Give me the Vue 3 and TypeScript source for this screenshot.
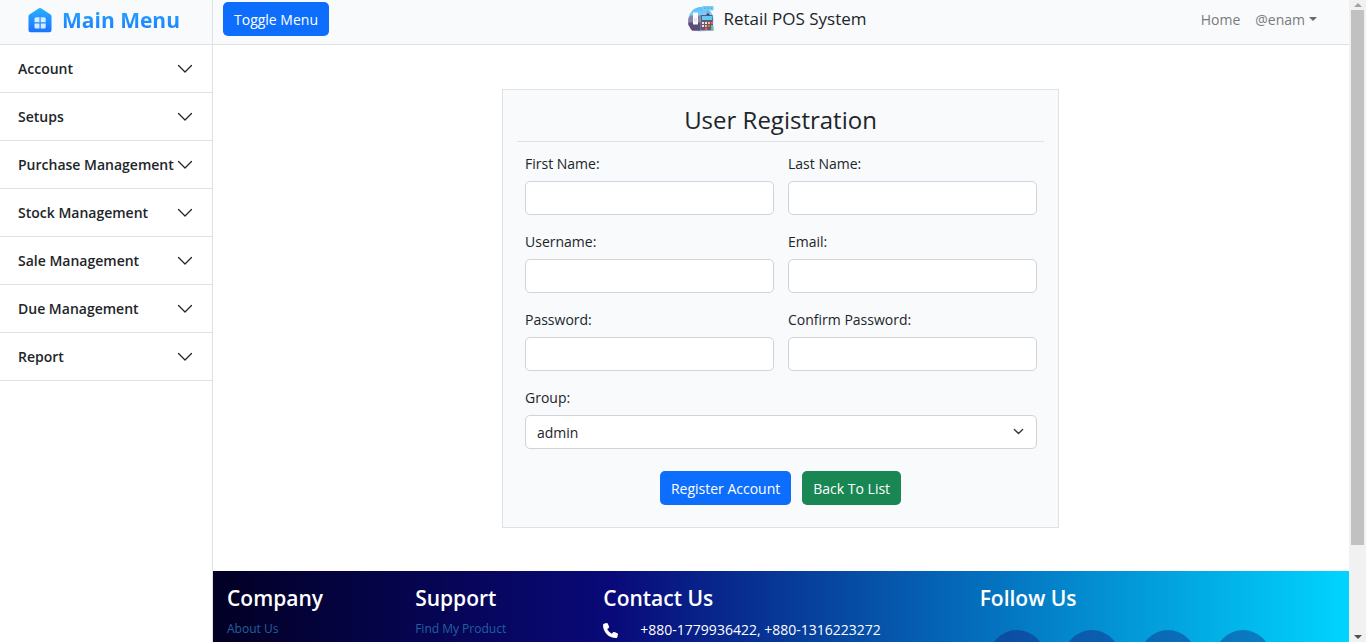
<script setup lang="ts">
import { reactive } from 'vue'

interface Field {
  id: 'first' | 'last' | 'username' | 'email' | 'password' | 'confirm'
  label: string
  type: string
}

const menu: string[] = [
  'Account',
  'Setups',
  'Purchase Management',
  'Stock Management',
  'Sale Management',
  'Due Management',
  'Report',
]

const fields: Field[] = [
  { id: 'first', label: 'First Name:', type: 'text' },
  { id: 'last', label: 'Last Name:', type: 'text' },
  { id: 'username', label: 'Username:', type: 'text' },
  { id: 'email', label: 'Email:', type: 'email' },
  { id: 'password', label: 'Password:', type: 'password' },
  { id: 'confirm', label: 'Confirm Password:', type: 'password' },
]

const form = reactive({
  first: '',
  last: '',
  username: '',
  email: '',
  password: '',
  confirm: '',
  group: 'admin',
})
</script>

<template>
  <div class="shell">
    <aside class="sidebar">
      <div class="brand">
        <svg class="brand-icon" viewBox="0 0 24 26" aria-hidden="true">
          <defs>
            <linearGradient id="house" x1="0" y1="0" x2="0" y2="1">
              <stop offset="0" stop-color="#27b0ff" />
              <stop offset="1" stop-color="#1a73ff" />
            </linearGradient>
          </defs>
          <path d="M10.6 1.4a2.4 2.4 0 0 1 2.8 0l8.8 5.9c.8.5 1.3 1.3 1.3 2.3v13.6a2.1 2.1 0 0 1-2.100 2.100H2.600a2.100 2.100 0 0 1-2.100-2.100V9.600c0-1 .5-1.800 1.300-2.300z" fill="url(#house)" />
          <g fill="#d3ebff">
            <path d="M8 10.200h3.500v5.100H6.500v-3.600a1.500 1.500 0 0 1 1.500-1.500z" />
            <path d="M12.700 10.200h3.500a1.500 1.500 0 0 1 1.500 1.500v3.600h-5z" />
            <path d="M6.500 16.500h5v5.100H8a1.500 1.500 0 0 1-1.500-1.500z" />
            <path d="M12.700 16.500h5v3.600a1.500 1.500 0 0 1-1.500 1.500h-3.500z" />
          </g>
        </svg>
        <span class="brand-name">Main Menu</span>
      </div>
      <nav aria-label="Main menu">
        <button v-for="item in menu" :key="item" type="button" class="menu-item">
          <span>{{ item }}</span>
          <svg class="chevron" viewBox="0 0 16 16" aria-hidden="true">
            <path d="M1.500 4.500 8 11l6.500-6.500" fill="none" stroke="#212529" stroke-width="1.300" stroke-linecap="round" stroke-linejoin="round" />
          </svg>
        </button>
      </nav>
    </aside>

    <div class="main">
      <header class="topbar">
        <div class="top-left">
          <button type="button" class="btn primary">Toggle Menu</button>
        </div>
        <a href="#" class="product">
          <svg class="product-icon" viewBox="0 0 28 28" aria-hidden="true">
            <defs>
              <linearGradient id="disc" x1="0" y1="0" x2="0" y2="1">
                <stop offset="0" stop-color="#55c0f5" />
                <stop offset="1" stop-color="#d2efff" />
              </linearGradient>
            </defs>
            <circle cx="14" cy="14.500" r="12.500" fill="url(#disc)" />
            <rect x="15.500" y="1" width="11" height="4.500" rx=".6" fill="#7accf5" />
            <path d="M17 3.200h2m1.200 0h2m1.200 0h2" stroke="#4fa9e6" stroke-width="1.200" />
            <rect x="20" y="5.500" width="1.600" height="4" fill="#7fa5cf" />
            <path d="M3 10.500h10v10H1.200v-6.700z" fill="#8a80a8" />
            <path d="M1.200 17.500h12.400v8.300H5.300q-3.200-2.700-4.100-8.300z" fill="#5b4d76" />
            <rect x="6" y="7.500" width="5" height="12" fill="#f7fafe" />
            <path d="M7 14h3m-3 2h3" stroke="#d0daea" />
            <path d="M13.500 10h12l1 15.500h-13z" fill="#665778" />
            <rect x="15" y="11" width="10" height="4" fill="#62caf2" />
            <path d="M19.500 9.500h3" stroke="#334a79" stroke-width="2" />
            <g fill="#f0e5e4">
              <rect x="15" y="17" width="2" height="2" />
              <rect x="18" y="17" width="2" height="2" />
              <rect x="15" y="20" width="2" height="2" />
            </g>
            <g fill="#f0c23e">
              <rect x="21" y="17" width="2" height="2" />
              <rect x="18" y="20" width="2" height="2" />
            </g>
            <g fill="#e45b68">
              <rect x="24" y="17" width="2" height="2" />
              <rect x="21" y="20" width="2" height="2" />
              <rect x="18" y="23" width="2" height="2" />
            </g>
            <rect x="24" y="20" width="2" height="5" fill="#56c2a8" />
          </svg>
          <span>Retail POS System</span>
        </a>
        <nav class="links" aria-label="User">
          <a href="#">Home</a>
          <a href="#" class="user">@enam<span class="caret"></span></a>
        </nav>
      </header>

      <main class="content">
        <form class="card" @submit.prevent>
          <h1>User Registration</h1>
          <div class="fields">
            <div v-for="f in fields" :key="f.id" class="field">
              <label :for="f.id">{{ f.label }}</label>
              <input :id="f.id" v-model="form[f.id]" :type="f.type" autocomplete="off" />
            </div>
            <div class="field wide">
              <label for="group">Group:</label>
              <div class="select">
                <select id="group" v-model="form.group">
                  <option value="admin">admin</option>
                </select>
                <svg class="select-arrow" viewBox="0 0 16 16" aria-hidden="true">
                  <path d="m2 5 6 6 6-6" fill="none" stroke="#343a40" stroke-width="2" stroke-linecap="round" stroke-linejoin="round" />
                </svg>
              </div>
            </div>
          </div>
          <div class="actions">
            <button type="submit" class="btn primary">Register Account</button>
            <button type="button" class="btn success">Back To List</button>
          </div>
        </form>
      </main>

      <footer class="footer">
        <section>
          <h2>Company</h2>
          <a href="#">About Us</a>
        </section>
        <section>
          <h2>Support</h2>
          <a href="#">Find My Product</a>
        </section>
        <section>
          <h2>Contact Us</h2>
          <p class="phone">
            <svg class="phone-icon" viewBox="0 0 512 512" aria-hidden="true">
              <path fill="#fff" d="M164.900 24.600c-7.700-18.600-28-28.500-47.400-23.200l-88 24C12.100 30.200 0 46 0 64c0 247.400 200.600 448 448 448 18 0 33.800-12.100 38.600-29.500l24-88c5.300-19.400-4.600-39.700-23.200-47.400l-96-40c-16.300-6.800-35.200-2.100-46.300 11.600L304.700 368C234.300 334.700 177.300 277.700 144 207.300l49.300-40.300c13.700-11.200 18.400-30 11.600-46.300z" />
            </svg>
            <span>+880-1779936422, +880-1316223272</span>
          </p>
        </section>
        <section>
          <h2>Follow Us</h2>
          <div class="social">
            <span v-for="n in 4" :key="n" class="disc"></span>
          </div>
        </section>
      </footer>
    </div>

    <div class="scrollbar" aria-hidden="true">
      <span class="arrow up"></span>
      <span class="track"><span class="thumb"></span></span>
      <span class="arrow down"></span>
    </div>
  </div>
</template>

<style>
body {
  margin: 0;
  overflow: hidden;
}
</style>

<style scoped>
.shell {
  display: flex;
  height: 100vh;
  overflow: hidden;
  background: #fff;
  color: #212529;
  font-family: "Segoe UI", "Open Sans", "Noto Sans", sans-serif;
  font-size: 14px;
  line-height: 21px;
}

.shell *,
.shell *::before,
.shell *::after {
  box-sizing: border-box;
}

button,
input,
select {
  font: inherit;
  color: inherit;
}

a {
  text-decoration: none;
}

.sidebar {
  flex: none;
  width: 213px;
  border-right: 1px solid #dee2e6;
}

.brand {
  display: flex;
  align-items: center;
  gap: 10px;
  height: 45px;
  padding: 0 0 5px 28px;
  background: #f8fafc;
  border-bottom: 1px solid #dee2e6;
}

.brand-icon {
  width: 24px;
  height: 26px;
}

.brand-name {
  font-size: 21px;
  line-height: 32px;
  font-weight: 700;
  background: linear-gradient(#27b0ff, #1a73ff);
  background-clip: text;
  -webkit-background-clip: text;
  color: transparent;
}

.menu-item {
  display: flex;
  align-items: center;
  justify-content: space-between;
  width: 100%;
  height: 48px;
  padding: 0 19px 0 18px;
  border: 0;
  border-bottom: 1px solid #dee2e6;
  background: #fff;
  font-weight: 600;
  text-align: left;
  white-space: nowrap;
}

.chevron {
  flex: none;
  width: 16px;
  height: 16px;
}

.main {
  flex: 1;
  min-width: 0;
  display: flex;
  flex-direction: column;
}

.topbar {
  flex: none;
  display: grid;
  grid-template-columns: 1fr auto 1fr;
  align-items: center;
  height: 45px;
  padding: 0 18px 6px 10px;
  background: #f8fafc;
  border-bottom: 1px solid #dee2e6;
}

.btn {
  height: 34px;
  padding: 0 11px;
  border: 0;
  border-radius: 5px;
  color: #fff;
}

.primary {
  background: #0d6efd;
}

.success {
  background: #198754;
}

.product {
  display: flex;
  align-items: center;
  gap: 8px;
  color: #212529;
  font-size: 17px;
  line-height: 26px;
}

.product-icon {
  width: 28px;
  height: 28px;
}

.links {
  display: flex;
  justify-content: flex-end;
  gap: 15px;
  padding-right: 14px;
}

.links a {
  color: #797b7d;
}

.user {
  display: flex;
  align-items: center;
  gap: 4px;
}

.caret {
  border: 4px solid transparent;
  border-top-color: #66686a;
  border-bottom: 0;
}

.content {
  flex: none;
  padding: 44px 15px 43px 14px;
}

.card {
  width: 100%;
  max-width: 557px;
  margin: 0 auto;
  padding: 14px 14px 22px;
  background: #f8fafc;
  border: 1px solid #dee2e6;
}

h1 {
  margin: 0 0 11px;
  padding-bottom: 5px;
  border-bottom: 1px solid #dee2e6;
  font-size: 24px;
  line-height: 32px;
  font-weight: 500;
  text-align: center;
}

.fields {
  display: grid;
  grid-template-columns: 1fr 1fr;
  gap: 16px 14px;
  padding: 0 7px 0 8px;
}

.wide {
  grid-column: 1 / -1;
}

.field label {
  display: block;
  margin-bottom: 7px;
}

.field input,
.field select {
  display: block;
  width: 100%;
  height: 34px;
  padding: 0 11px;
  border: 1px solid #ced4da;
  border-radius: 5px;
  background: #fff;
  appearance: none;
}

.select {
  position: relative;
}

.select-arrow {
  position: absolute;
  top: 11px;
  right: 13px;
  width: 11px;
  height: 11px;
  pointer-events: none;
}

.actions {
  display: flex;
  justify-content: center;
  gap: 11px;
  margin-top: 22px;
}

.footer {
  flex: 1 0 auto;
  display: grid;
  grid-template-columns: 2fr 2fr 4fr 4fr;
  padding: 11px 0 0 7px;
  background: linear-gradient(90deg, #020024 0%, #090979 35%, #00d4ff 100%);
  color: #fff;
}

.footer section {
  min-width: 0;
  padding: 0 7px;
}

.footer h2 {
  margin: 0 0 6px;
  font-size: 21px;
  line-height: 32px;
  font-weight: 600;
}

.footer a {
  display: block;
  color: #22609f;
  font-size: 12px;
  line-height: 18px;
}

.phone {
  display: flex;
  align-items: center;
  gap: 22px;
  margin: 0;
  line-height: 20px;
}

.phone-icon {
  width: 15px;
  height: 15px;
}

.social {
  display: grid;
  grid-template-columns: repeat(4, 1fr);
  justify-items: center;
  width: 83%;
  padding-top: 10px;
}

.disc {
  width: 56px;
  height: 56px;
  border-radius: 50%;
  background: rgba(30, 4, 110, 0.35);
}

.scrollbar {
  flex: none;
  display: flex;
  flex-direction: column;
  align-items: center;
  width: 17px;
  background: #f1f1f1;
}

.arrow {
  flex: none;
  margin: 3px 0;
  border: 4px solid transparent;
}

.up {
  border-top: 0;
  border-bottom-color: #a3a3a3;
}

.down {
  border-bottom: 0;
  border-top-color: #505050;
}

.track {
  flex: 1;
  width: 13px;
}

.thumb {
  display: block;
  height: 86%;
  background: #c1c1c1;
}
</style>
